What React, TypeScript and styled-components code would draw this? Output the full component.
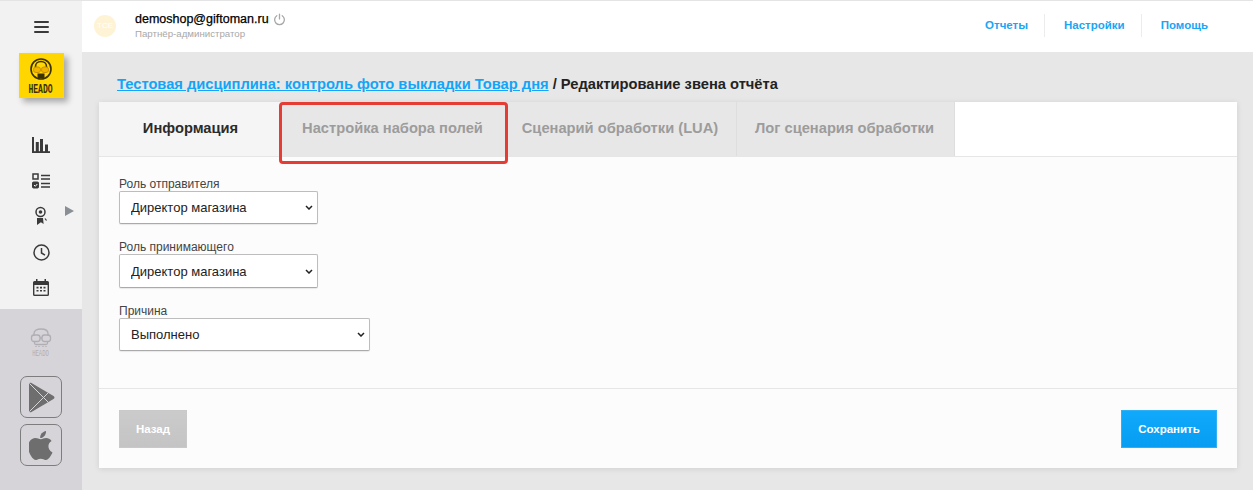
import React from "react";
import styled, { createGlobalStyle } from "styled-components";

const Global = createGlobalStyle`
  html, body { margin: 0; padding: 0; background: #e7e7e7; }
  body { font-family: "Liberation Sans", Arial, sans-serif; overflow: hidden; }
  * { box-sizing: border-box; }
`;
const Page = styled.div`
  width: 1253px; height: 490px; display: flex; overflow: hidden; background: #e7e7e7;
`;
const Sidebar = styled.aside`
  width: 82px; flex: none; height: 490px; display: flex; flex-direction: column; background: #f2f2f2;
`;
const SideTop = styled.div`
  height: 309px; flex: none; display: flex; flex-direction: column; align-items: center; padding-top: 20px;
  border-top: 1px solid #e4e4e4; position: relative;
`;
const Burger = styled.div`
  display: flex; flex-direction: column; gap: 3px; width: 15px; height: 12px; margin-bottom: 20px;
  span { display: block; height: 2px; background: #3a3a3a; border-radius: 1px; }
`;
const Logo = styled.div`
  width: 45px; height: 45px; background: #ffd600; box-shadow: 4px 4px 6px rgba(0,0,0,.3);
  display: flex; flex-direction: column; align-items: center; padding-top: 5px; margin-bottom: 29.5px;
`;
const LogoText = styled.span<{ $ghost?: boolean }>`
  font-family: "Liberation Mono", monospace; font-weight: ${(p) => (p.$ghost ? 400 : 700)};
  font-size: ${(p) => (p.$ghost ? 9 : 13)}px; line-height: ${(p) => (p.$ghost ? 9 : 12)}px;
  color: ${(p) => (p.$ghost ? "#b0aeb3" : "#3c3000")};
  transform: scaleX(0.62);
  margin-top: ${(p) => (p.$ghost ? 2 : 3)}px;
`;
const NavIcons = styled.nav`
  display: flex; flex-direction: column; align-items: center;
`;
const NavIcon = styled.div`
  width: 20px; height: 35.6px; display: flex; align-items: center; justify-content: center; color: #3a3a3a;
`;
const Arrow = styled.div`
  position: absolute; left: 65px; top: 205px; width: 0; height: 0;
  border-left: 9px solid #8a8f96; border-top: 5px solid transparent; border-bottom: 5px solid transparent;
`;
const SideBottom = styled.div`
  flex: 1; background: #d6d4d9; display: flex; flex-direction: column; align-items: center; padding-top: 19px;
`;
const GhostLogo = styled.div`
  height: 48px; display: flex; flex-direction: column; align-items: center;
`;
const StoreButton = styled.div`
  width: 42px; height: 42px; border: 1px solid #7d7d7d; border-radius: 7px; display: flex;
  align-items: center; justify-content: center; margin-bottom: 6px; color: #6e6e6e;
`;
const Main = styled.div`
  flex: 1; min-width: 0; display: flex; flex-direction: column;
`;
const Header = styled.header`
  height: 52px; flex: none; background: #fff; border-top: 1px solid #e4e4e4; display: flex; align-items: center;
  padding: 0 29px 0 12px;
`;
const Avatar = styled.div`
  width: 22px; height: 22px; border-radius: 50%; background: #fff3d6; color: #fff; font-size: 8px;
  display: flex; align-items: center; justify-content: center; margin-right: 19px; margin-top: -2px;
`;
const UserBlock = styled.div`
  display: flex; flex-direction: column; margin-top: -2px;
`;
const UserRow = styled.div`
  display: flex; align-items: center; gap: 4px; font-size: 12.5px; line-height: 15px; color: #000;
  -webkit-text-stroke: .25px #000;
`;
const Role = styled.div`
  font-size: 9.7px; line-height: 11px; color: #a8a8a8; margin-top: 1px;
`;
const TopLinks = styled.nav`
  margin-left: auto; display: flex; align-items: center; margin-top: -2px;
`;
const TopLink = styled.a<{ $last?: boolean }>`
  font-size: 11.5px; font-weight: 700; color: #1ba5f5; height: 23px; line-height: 23px; padding: 0 16px 0 19px;
  border-right: ${(p) => (p.$last ? "none" : "1px solid #ececec")};
`;
const Content = styled.main`
  flex: 1; padding: 23px 16px 22px 17px; display: flex; flex-direction: column;
`;
const Title = styled.h1`
  margin: 0 0 8px 18px; font-size: 14.7px; line-height: 19px; font-weight: 700; color: #222; white-space: nowrap;
`;
const TitleLink = styled.a`
  color: #12a5f8; text-decoration: underline;
`;
const Card = styled.section`
  position: relative; height: 366px; background: #fcfcfc; box-shadow: 0 1px 6px rgba(0,0,0,.1);
  display: flex; flex-direction: column;
`;
const Tabs = styled.div`
  height: 55px; flex: none; display: flex; background: #fff; border-bottom: 1px solid #e6e6e6;
`;
const Tab = styled.div<{ $active?: boolean; $w: number }>`
  width: ${(p) => p.$w}px; height: 54px; display: flex; align-items: center; justify-content: center;
  font-size: 14.7px; font-weight: 700; white-space: nowrap; padding: 0 ${(p) => (p.$active ? 0 : 2)}px 2px 0;
  color: ${(p) => (p.$active ? "#2b2b2b" : "#9c9c9c")};
  background: ${(p) => (p.$active ? "#f5f5f5" : "#e7e7e7")};
  border-right: ${(p) => (p.$active ? "none" : "1px solid #dedede")};
`;
const Highlight = styled.div`
  position: absolute; left: 180px; top: 0; width: 229px; height: 62px;
  border: 3px solid #e53c33; border-radius: 4px; pointer-events: none;
`;
const Form = styled.form`
  flex: 1; padding: 20px 20px 0; display: flex; flex-direction: column; gap: 16px;
`;
const Field = styled.div`
  display: flex; flex-direction: column;
`;
const Label = styled.label`
  font-size: 12px; line-height: 14px; color: #444;
`;
const Select = styled.select<{ $w: number }>`
  width: ${(p) => p.$w}px; height: 33.4px; font-family: "Liberation Sans", Arial, sans-serif; font-size: 13px;
  color: #222; border: 1px solid #bdbdbd; border-bottom-color: #aaa; border-radius: 2px;
  padding: 0 0 0 11px; box-shadow: 0 1px 1px rgba(0,0,0,.08); appearance: none;
  background: #fff url("data:image/svg+xml,%3Csvg xmlns='http://www.w3.org/2000/svg' width='8' height='5' viewBox='0 0 8 5'%3E%3Cpath d='M1 1l3 3 3-3' fill='none' stroke='%23222' stroke-width='1.500'/%3E%3C/svg%3E") no-repeat right 4px center;
`;
const Footer = styled.footer`
  height: 80px; flex: none; border-top: 1px solid #e6e6e6; padding: 21px 20px 0;
  display: flex; justify-content: space-between; align-items: flex-start;
`;
const Button = styled.button<{ $primary?: boolean }>`
  height: 38px; width: ${(p) => (p.$primary ? 96 : 68)}px; font-family: "Liberation Sans", Arial, sans-serif;
  font-size: 11.5px; font-weight: 700; color: #fff; padding: 0; border-radius: 0;
  background: ${(p) => (p.$primary ? "linear-gradient(#10a9fb,#069df2)" : "linear-gradient(#cbcbcb,#c4c4c4)")};
  border: 1px solid ${(p) => (p.$primary ? "#2fb0f5" : "#c9c9c9")};
`;

export default function App() {
  return (
    <Page>
      <Global />
      <Sidebar>
        <SideTop>
          <Burger><span /><span /><span /></Burger>
          <Logo>
            <svg width="22" height="23" viewBox="0 0 22 23" fill="none">
              <circle cx="11" cy="11" r="10" fill="#ffd600" stroke="#3b3000" strokeWidth="1.600" />
              <path d="M5.500 11V8.500C5.500 5.500 8 3.500 11 3.500s5.500 2 5.500 5V11" stroke="#3b3000" strokeWidth="1.600" />
              <rect x="3.500" y="9" width="7" height="5.500" rx="2.400" fill="#f0b400" stroke="#c98f00" strokeWidth="1" />
              <rect x="11.500" y="9" width="7" height="5.500" rx="2.400" fill="#f0b400" stroke="#c98f00" strokeWidth="1" />
              <rect x="7.500" y="15.500" width="7" height="5" fill="#3b3000" />
            </svg>
            <LogoText>HEADO</LogoText>
          </Logo>
          <NavIcons>
            <NavIcon>
              <svg width="18" height="16" viewBox="0 0 18 16" fill="#3a3a3a">
                <rect x="0" y="0" width="2" height="16" />
                <rect x="0" y="14.200" width="18" height="1.800" />
                <rect x="3.800" y="5" width="3" height="10" />
                <rect x="8" y="2" width="3" height="13" />
                <rect x="13" y="7.500" width="3" height="7.500" />
              </svg>
            </NavIcon>
            <NavIcon>
              <svg width="18" height="16" viewBox="0 0 18 16" fill="none" stroke="#3a3a3a">
                <rect x="1" y="1" width="5" height="5" strokeWidth="1.500" />
                <rect x="0.500" y="9" width="6" height="6" rx="1" fill="#3a3a3a" />
                <path d="M2 12l1.300 1.300L5.300 11" stroke="#fff" strokeWidth="1" />
                <path d="M9 2.500h9M9 6h9M9 10.500h9M9 14h9" strokeWidth="1.400" />
              </svg>
            </NavIcon>
            <NavIcon>
              <svg width="14" height="20" viewBox="0 0 14 20" fill="none">
                <circle cx="6.500" cy="6" r="4.500" stroke="#3a3a3a" strokeWidth="1.500" />
                <circle cx="6.500" cy="6" r="1.800" fill="#3a3a3a" />
                <path d="M3 12h6l.6 6-2.700-1.800L3 19z" fill="#3a3a3a" />
                <path d="M11 12.500l1.500 2" stroke="#3a3a3a" strokeWidth="1.200" />
              </svg>
            </NavIcon>
            <NavIcon>
              <svg width="17" height="17" viewBox="0 0 17 17" fill="none" stroke="#3a3a3a" strokeWidth="1.500">
                <circle cx="8.500" cy="8.500" r="7.500" />
                <path d="M8.500 4v5l3.500 2.200" />
              </svg>
            </NavIcon>
            <NavIcon>
              <svg width="16" height="17" viewBox="0 0 16 17" fill="#3a3a3a">
                <path d="M3 0h1.500v2h7V0H13v2h1.500A1.500 1.500 0 0 1 16 3.500v12a1.500 1.500 0 0 1-1.500 1.500h-13A1.500 1.500 0 0 1 0 15.500v-12A1.500 1.500 0 0 1 1.500 2H3z" />
                <rect x="1.400" y="6" width="13.200" height="9.600" fill="#f2f2f2" />
                <path d="M3.500 7.800h2v1.600h-2zM7 7.800h2v1.600H7zM10.500 7.800h2v1.600h-2zM3.500 11h2v1.600h-2zM7 11h2v1.600H7zM10.500 11h2v1.600h-2z" />
              </svg>
            </NavIcon>
          </NavIcons>
          <Arrow />
        </SideTop>
        <SideBottom>
          <GhostLogo>
            <svg width="22" height="20" viewBox="0 0 22 20" fill="none" stroke="#b0aeb3" strokeWidth="1.300">
              <path d="M4 8V5.500C4 2.500 7 1 11 1s7 1.500 7 4.500V8" />
              <rect x="1.500" y="7" width="8.500" height="6.500" rx="2.500" />
              <rect x="12" y="7" width="8.500" height="6.500" rx="2.500" />
              <path d="M10 10h2M4.500 13.500V15c0 1 .8 1.500 1.500 1.500h10c.7 0 1.500-.5 1.500-1.500v-1.500M6 19v-1M9 19v-1M13 19v-1M16 19v-1" />
            </svg>
            <LogoText $ghost>HEADO</LogoText>
          </GhostLogo>
          <StoreButton>
            <svg width="27" height="31" viewBox="0 0 27 31" fill="none">
              <path d="M1 2.500C1 1 2.200.3 3.500 1L25.500 14c1.300.8 1.300 2.200 0 3L3.500 30C2.200 30.700 1 30 1 28.500z" fill="#6e6e6e" />
              <path d="M1.500 1.500L20.500 20.500M1.500 29.500L20.500 10.500" stroke="#d6d4d9" strokeWidth="1" />
            </svg>
          </StoreButton>
          <StoreButton>
            <svg width="24" height="29" viewBox="0 0 24 29" fill="#6e6e6e">
              <path d="M17 0c.2 2-.6 3.700-1.600 4.900-1.100 1.300-2.700 2.200-4.200 2.100-.2-1.800.6-3.600 1.600-4.700C14 1.100 15.700.2 17 0z" />
              <path d="M23.500 21.500c-.7 1.500-1 2.200-1.900 3.500-1.200 1.900-3 4-5 4-1.900 0-2.400-1.200-5-1.200S9 29 7.100 29c-2.100 0-3.600-1.900-4.900-3.800C-1.300 20-1.700 13.900.4 10.700c1.500-2.300 3.800-3.600 6-3.600s3.600 1.200 5.400 1.200c1.800 0 2.900-1.200 5.400-1.200 1.900 0 3.900 1 5.400 2.800-4.700 2.600-4 9.300.9 11.600z" />
            </svg>
          </StoreButton>
        </SideBottom>
      </Sidebar>
      <Main>
        <Header>
          <Avatar>TCE</Avatar>
          <UserBlock>
            <UserRow>
              demoshop@giftoman.ru
              <svg width="13" height="13" viewBox="0 0 12 12" fill="none" stroke="#a8a8a8" strokeWidth="1.200" strokeLinecap="round">
                <path d="M3.500 2.500a4.500 4.500 0 1 0 5 0M6 1v4.500" />
              </svg>
            </UserRow>
            <Role>Партнёр-администратор</Role>
          </UserBlock>
          <TopLinks>
            <TopLink>Отчеты</TopLink>
            <TopLink>Настройки</TopLink>
            <TopLink $last>Помощь</TopLink>
          </TopLinks>
        </Header>
        <Content>
          <Title>
            <TitleLink>Тестовая дисциплина: контроль фото выкладки Товар дня</TitleLink> / Редактирование звена отчёта
          </Title>
          <Card>
            <Tabs>
              <Tab $active $w={183}>Информация</Tab>
              <Tab $w={224}>Настройка набора полей</Tab>
              <Tab $w={231}>Сценарий обработки (LUA)</Tab>
              <Tab $w={218}>Лог сценария обработки</Tab>
            </Tabs>
            <Highlight />
            <Form>
              <Field>
                <Label>Роль отправителя</Label>
                <Select $w={199}><option>Директор магазина</option></Select>
              </Field>
              <Field>
                <Label>Роль принимающего</Label>
                <Select $w={199}><option>Директор магазина</option></Select>
              </Field>
              <Field>
                <Label>Причина</Label>
                <Select $w={251}><option>Выполнено</option></Select>
              </Field>
            </Form>
            <Footer>
              <Button type="button">Назад</Button>
              <Button type="button" $primary>Сохранить</Button>
            </Footer>
          </Card>
        </Content>
      </Main>
    </Page>
  );
}
